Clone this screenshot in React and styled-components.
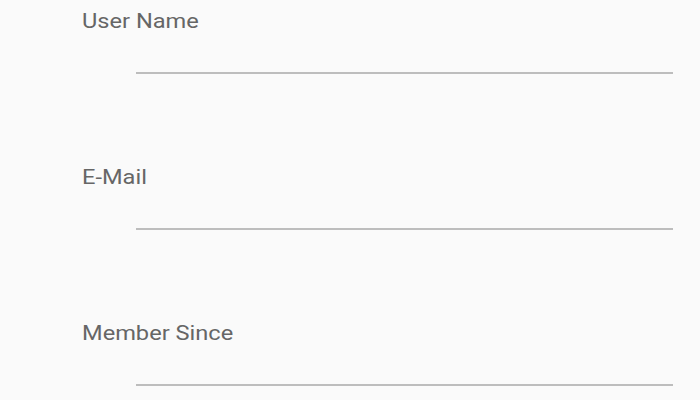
import React from 'react';
import styled, { createGlobalStyle } from 'styled-components';

const GlobalStyle = createGlobalStyle`
  body {
    margin: 0;
    background: #fafafa;
    font-family: Roboto, "Liberation Sans", sans-serif;
  }
`;

const Form = styled.div`
  display: flex;
  flex-direction: column;
  padding-top: 9px;
`;

const Field = styled.div`
  display: flex;
  flex-direction: column;
  height: 156px;

  &:last-child {
    height: auto;
  }
`;

const Label = styled.label`
  align-self: flex-start;
  margin-left: 82px;
  font-size: 21px;
  line-height: 24px;
  color: #666666;
  transform: scaleX(1.125);
  transform-origin: left center;
`;

const Input = styled.input`
  margin: 26px 27px 0 136px;
  height: 13px;
  padding: 0;
  border: none;
  border-bottom: 2px solid #bdbdbd;
  background: transparent;
  font-family: inherit;
  font-size: 16px;
  outline: none;
`;

const fields = ['User Name', 'E-Mail', 'Member Since'];

export default function App() {
  return (
    <>
      <GlobalStyle />
      <Form>
        {fields.map((f) => (
          <Field key={f}>
            <Label>{f}</Label>
            <Input />
          </Field>
        ))}
      </Form>
    </>
  );
}
